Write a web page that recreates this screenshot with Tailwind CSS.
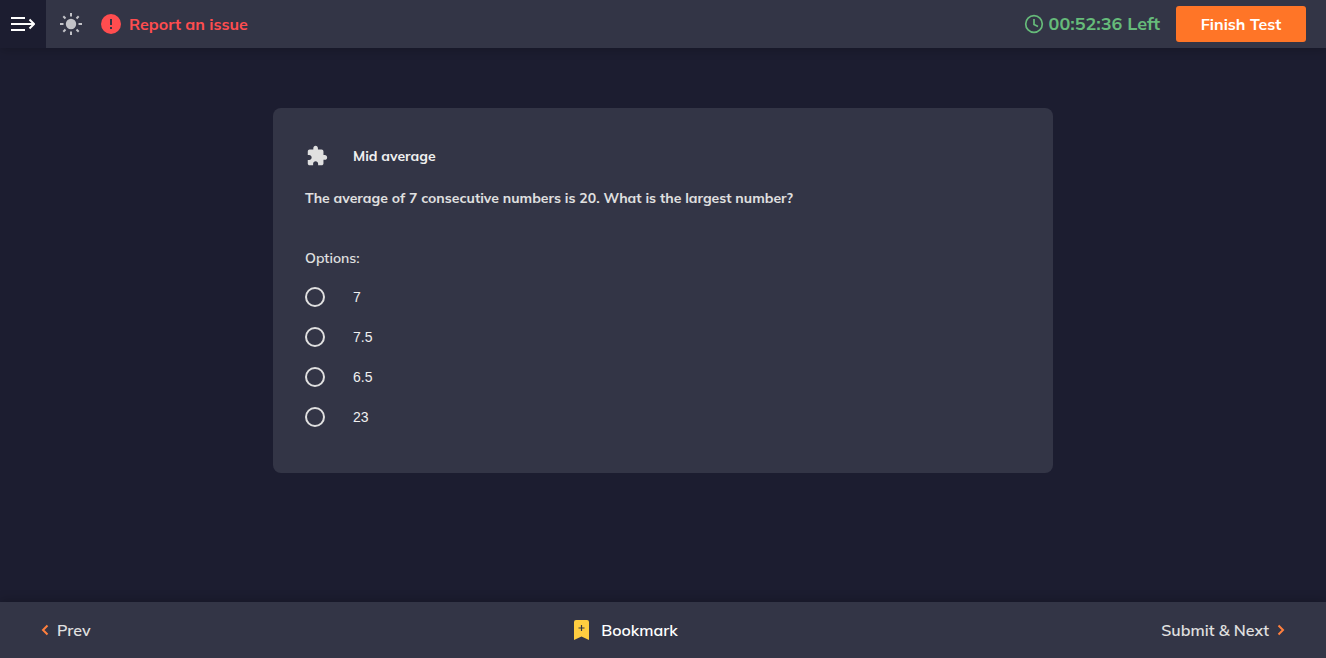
<!DOCTYPE html>
<html lang="en">
<head>
<meta charset="utf-8">
<meta name="viewport" content="width=device-width, initial-scale=1">
<title>Mid average</title>
<script src="https://cdn.jsdelivr.net/npm/@tailwindcss/browser@4"></script>
</head>
<body class="flex min-h-screen flex-col bg-[#1c1d30] font-[Mulish,Muli,Lato,sans-serif] text-[#e0e0e0]">
<header class="flex h-12 items-center bg-[#333546] pr-5 shadow-[0_2px_10px_rgba(0,0,0,0.2)]">
  <button type="button" aria-label="Open menu" class="flex h-12 w-[46px] items-center justify-center bg-[#1c1d30] text-white">
    <svg class="h-4 w-6" viewBox="0 0 24 16" fill="none" stroke="currentColor" stroke-width="2"><path d="M0 2h14M0 8h23M0 14h14"/><path d="M18.500 3.500 23 8l-4.500 4.500"/></svg>
  </button>
  <button type="button" aria-label="Toggle theme" class="ml-3.5 text-[#c3c3c8]">
    <svg class="size-[22px]" viewBox="0 0 22 22" fill="none" stroke="currentColor" stroke-width="2"><circle cx="11" cy="11" r="5.200" fill="currentColor" stroke="none"/><path d="M11 0v3.500M11 18.500V22M0 11h3.500M18.500 11H22M3.300 3.300l2.200 2.200M16.500 16.500l2.200 2.200M3.300 18.700l2.200-2.200M16.500 5.500l2.200-2.200"/></svg>
  </button>
  <button type="button" class="ml-[19px] flex items-center gap-2 text-base font-bold text-[#ff4d4f]">
    <svg class="size-5" viewBox="0 0 20 20"><circle cx="10" cy="10" r="10" fill="currentColor"/><path d="M10 5v6M10 13v2" stroke="#333546" stroke-width="2"/></svg>
    Report an issue
  </button>
  <div class="ml-auto flex items-center gap-[5px] text-lg font-bold text-[#66bb7a]" role="timer">
    <svg class="size-5" viewBox="0 0 20 20" fill="none" stroke="currentColor" stroke-width="1.700"><circle cx="10" cy="10" r="8.300"/><path d="M10 5v5.500l4 2"/></svg>
    00:52:36 Left
  </div>
  <button type="button" class="ml-4 h-9 w-[130px] rounded-[3px] bg-[#ff7527] text-base font-bold text-white">Finish Test</button>
</header>
<main class="flex-1 px-4 py-15">
  <form class="mx-auto max-w-[780px] rounded-lg bg-[#333546] px-8 pt-9 pb-9">
    <div class="flex h-6 items-center gap-6">
      <svg class="size-6 fill-current" viewBox="-1 -1 26 26"><path d="M20.500 11H19V7c0-1.100-.900-2-2-2h-4V3.500C13 2.120 11.880 1 10.500 1S8 2.120 8 3.500V5H4c-1.100 0-1.990.900-1.990 2v3.800H3.500c1.490 0 2.700 1.210 2.700 2.700s-1.210 2.700-2.700 2.700H2V20c0 1.100.900 2 2 2h3.800v-1.500c0-1.490 1.210-2.700 2.700-2.700s2.700 1.210 2.700 2.700V22H17c1.100 0 2-.900 2-2v-4h1.500c1.380 0 2.500-1.120 2.500-2.500S21.880 11 20.500 11z"/></svg>
      <h1 class="text-sm font-bold text-[#f0f0f0]">Mid average</h1>
    </div>
    <p class="mt-[18px] text-sm leading-6 font-bold">The average of 7 consecutive numbers is 20. What is the largest number?</p>
    <fieldset class="mt-9">
      <legend class="text-sm leading-6 font-semibold">Options:</legend>
      <div class="pt-[7px] font-['Liberation_Sans',Arial,sans-serif] text-sm text-[#f0f0f0]">
        <label class="flex h-10 items-center gap-7"><input type="radio" name="answer" value="7" class="size-5 appearance-none rounded-full border-2 border-[#e0e0e0] checked:bg-[#ff7527]">7</label>
        <label class="flex h-10 items-center gap-7"><input type="radio" name="answer" value="7.5" class="size-5 appearance-none rounded-full border-2 border-[#e0e0e0] checked:bg-[#ff7527]">7.5</label>
        <label class="flex h-10 items-center gap-7"><input type="radio" name="answer" value="6.5" class="size-5 appearance-none rounded-full border-2 border-[#e0e0e0] checked:bg-[#ff7527]">6.5</label>
        <label class="flex h-10 items-center gap-7"><input type="radio" name="answer" value="23" class="size-5 appearance-none rounded-full border-2 border-[#e0e0e0] checked:bg-[#ff7527]">23</label>
      </div>
    </fieldset>
  </form>
</main>
<footer class="grid h-14 grid-cols-3 items-center bg-[#333546] px-[41px] text-base font-semibold shadow-[0_-2px_10px_rgba(0,0,0,0.2)]">
  <button type="button" class="flex items-center gap-2 justify-self-start"><svg class="h-3 w-2" viewBox="0 0 8 12" fill="none" stroke="#ff7f3d" stroke-width="2"><path d="M6.500 1.500 2 6l4.500 4.500"/></svg>Prev</button>
  <button type="button" class="mr-[74px] flex items-center gap-3 justify-self-center text-white"><svg class="h-5 w-[15px]" viewBox="0 0 15 20"><path d="M0 2a2 2 0 0 1 2-2h11a2 2 0 0 1 2 2v18l-7.500-3.500L0 20z" fill="#ffcd40"/><path d="M7.500 5v6M4.500 8h6" stroke="#333546" stroke-width="1.200"/></svg>Bookmark</button>
  <button type="button" class="flex items-center gap-2 justify-self-end">Submit &amp; Next<svg class="h-3 w-2" viewBox="0 0 8 12" fill="none" stroke="#ff7f3d" stroke-width="2"><path d="m1.500 1.500 4.500 4.500-4.500 4.500"/></svg></button>
</footer>
</body>
</html>
